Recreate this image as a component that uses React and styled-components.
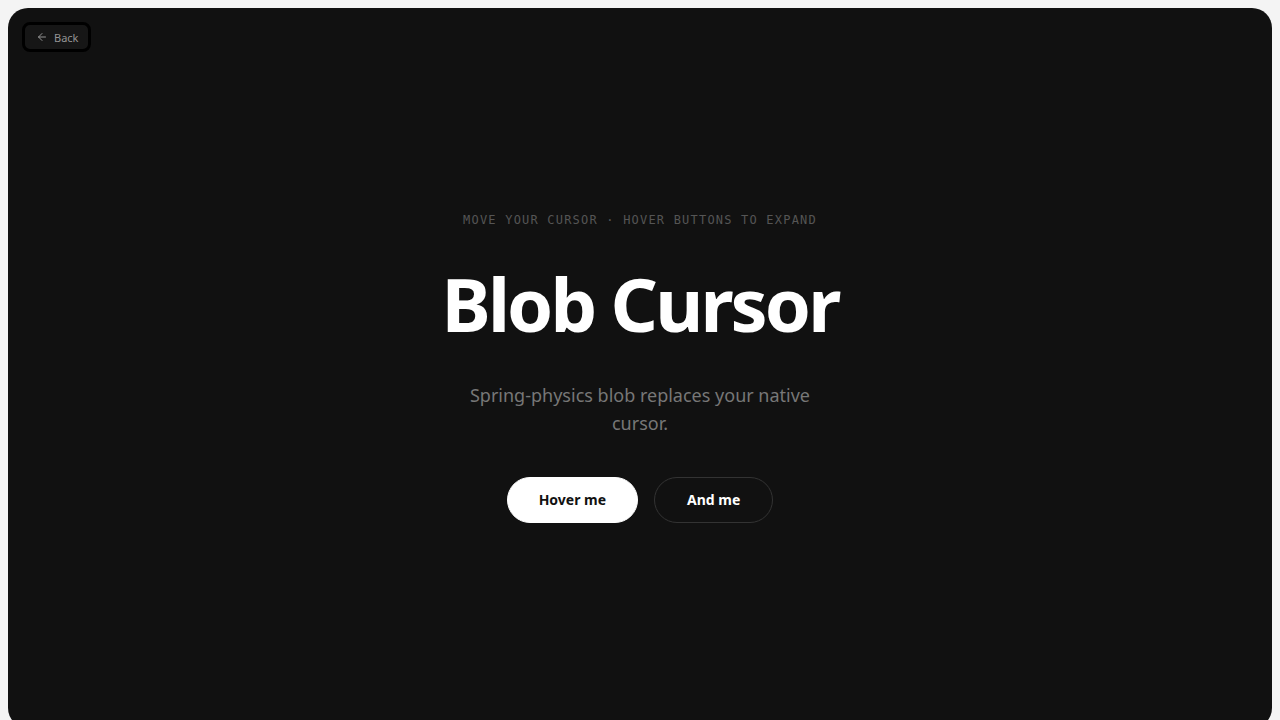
import React from "react";
import styled, { createGlobalStyle } from "styled-components";

const Global = createGlobalStyle`
  html, body { background: #f4f4f4; }
  body { margin: 8px; font-family: "Noto Sans", "Open Sans", sans-serif; }
  * { box-sizing: border-box; }
`;

const Panel = styled.main`
  position: relative;
  min-height: 100vh;
  padding-bottom: 2px;
  background: #111111;
  border-radius: 20px;
  display: flex;
  flex-direction: column;
  align-items: center;
  justify-content: center;
  overflow: hidden;
`;

const BackButton = styled.button`
  position: absolute;
  top: 14px;
  left: 14px;
  display: flex;
  align-items: center;
  gap: 6px;
  height: 30px;
  padding: 0 10px 0 11px;
  background: #161616;
  border: 3px solid #000;
  border-radius: 8px;
  color: #949494;
  font-family: "Noto Sans", sans-serif;
  font-size: 11px;
  cursor: pointer;
`;

const Eyebrow = styled.div`
  font-family: "DejaVu Sans Mono", "Liberation Mono", monospace;
  font-size: 12px;
  letter-spacing: 0.1em;
  color: #555555;
  text-transform: uppercase;
  line-height: 16px;
`;

const Title = styled.h1`
  margin: 39px 0 0;
  font-family: "Noto Sans", sans-serif;
  font-weight: 700;
  font-size: 74px;
  line-height: 74px;
  letter-spacing: -2.9px;
  color: #ffffff;
`;

const Desc = styled.p`
  margin: 40px 0 0;
  max-width: 360px;
  text-align: center;
  font-size: 18px;
  line-height: 28px;
  color: #777777;
`;

const Row = styled.div`
  display: flex;
  gap: 16px;
  margin-top: 40px;
`;

const Pill = styled.button`
  height: 46px;
  padding: 0 ${(p) => (p.$primary ? "31px" : "32px")};
  border-radius: 999px;
  font-family: "Noto Sans", sans-serif;
  font-size: 14px;
  font-weight: 700;
  cursor: pointer;
  background: ${(p) => (p.$primary ? "#ffffff" : "transparent")};
  color: ${(p) => (p.$primary ? "#111111" : "#ffffff")};
  border: 1px solid ${(p) => (p.$primary ? "#ffffff" : "#333333")};
`;

export default function App() {
  return (
    <>
      <Global />
      <Panel>
        <BackButton>
          <svg width="12" height="12" viewBox="0 0 24 24" fill="none" stroke="currentColor" strokeWidth="2" strokeLinecap="round" strokeLinejoin="round">
            <path d="M19 12H5" />
            <path d="M12 19l-7-7 7-7" />
          </svg>
          Back
        </BackButton>
        <Eyebrow>Move your cursor · Hover buttons to expand</Eyebrow>
        <Title>Blob Cursor</Title>
        <Desc>Spring-physics blob replaces your native cursor.</Desc>
        <Row>
          <Pill $primary>Hover me</Pill>
          <Pill>And me</Pill>
        </Row>
      </Panel>
    </>
  );
}
